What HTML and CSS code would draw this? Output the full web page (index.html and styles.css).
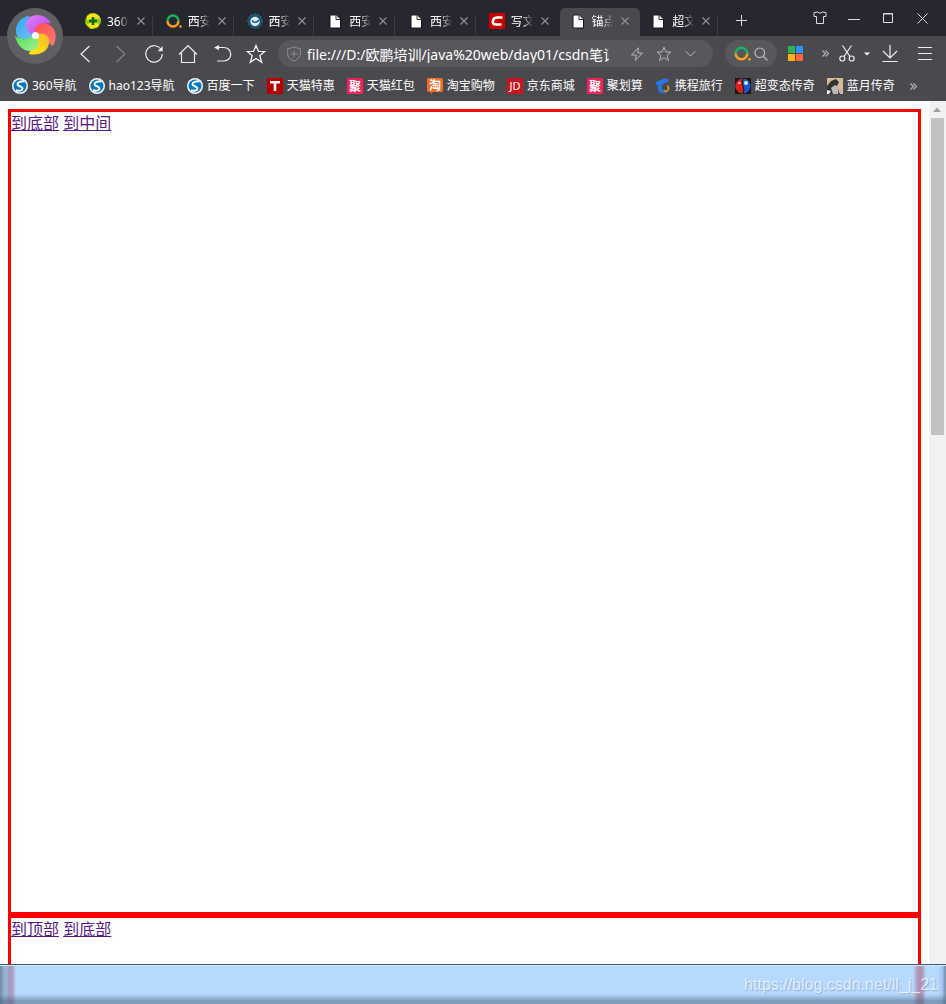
FILE: index.html
```html
<!DOCTYPE html>
<html lang="zh-CN">
<head>
<meta charset="utf-8">
<title>锚点</title>
<link rel="stylesheet" href="styles.css">
</head>
<body>
<svg class="defs" aria-hidden="true">
  <symbol id="close" viewBox="0 0 8 8"><path d="M.5 .5l7 7M7.5 .5l-7 7" fill="none" stroke="#929297" stroke-width="1.1"/></symbol>
  <symbol id="file" viewBox="0 0 16 16"><path d="M3 2h6.500l4 4v9H3z" fill="#fff" stroke="#17171b" stroke-width="1"/><path d="M9 2.500V6.500h4" fill="none" stroke="#35353a"/></symbol>
  <symbol id="sogou" viewBox="0 0 16 16"><circle cx="8" cy="8" r="8" fill="#eef4f8"/><circle cx="8" cy="8" r="6.500" fill="#0878bd"/><path d="M12.500 3.500C9 3 5.500 4 5.500 6.200c0 2.200 5 2 5 4.300 0 2.200-3.500 2.800-6.500 1.800" fill="none" stroke="#fff" stroke-width="2"/></symbol>
  <symbol id="ju" viewBox="0 0 16 16"><rect width="16" height="16" rx="1.500" fill="#f5215c"/><text x="8" y="12.500" text-anchor="middle" class="glyph">聚</text></symbol>
  <symbol id="ring" viewBox="0 0 16 16"><path d="M1.500 8a5.500 5.500 0 0 1 11 0" fill="none" stroke="#17b35f" stroke-width="2.400"/><path d="M1.500 8a5.500 5.500 0 0 0 11 0" fill="none" stroke="#f9a11b" stroke-width="2.400"/><circle cx="14.500" cy="13.500" r="1.300" fill="#f9a11b"/></symbol>
  <symbol id="star" viewBox="0 0 20 20"><path d="M10 1.500l2.500 6h6.200l-4.900 4.100 1.900 6.700L10 14.500l-5.700 3.800 1.900-6.700-4.900-4.100h6.200z" fill="none" stroke="currentColor" stroke-width="1.200"/></symbol>
</svg>

<header class="chrome">
  <button class="logo" aria-label="浏览器菜单">
    <svg viewBox="0 0 56 56">
      <defs>
        <linearGradient id="gb" x1="0" y1="0" x2="1" y2="1"><stop stop-color="#2aa4f4"/><stop offset="1" stop-color="#7cc4ee"/></linearGradient>
        <linearGradient id="gp" x1="0" y1="0" x2="1" y2="1"><stop stop-color="#e284f8"/><stop offset="1" stop-color="#b13cea"/></linearGradient>
        <linearGradient id="gr" x1="0" y1="0" x2="1" y2="1"><stop stop-color="#ff4d4a"/><stop offset="1" stop-color="#ff7b74"/></linearGradient>
        <linearGradient id="gy" x1="1" y1="0" x2="0" y2="1"><stop stop-color="#f7b62e"/><stop offset="1" stop-color="#ffee00"/></linearGradient>
        <linearGradient id="gg" x1="0" y1="0" x2="1" y2="1"><stop stop-color="#50dc62"/><stop offset="1" stop-color="#a8f08f"/></linearGradient>
      </defs>
      <circle cx="28" cy="28" r="28" fill="#606063"/>
      <path d="M28 28C20 32 10 34 9 24C8 15 15 8 23 8Q20 12 20 16Q21 23 28 28z" fill="url(#gb)"/>
      <path d="M28 28C18 24 17 14 22 10C30 4 40 8 44 15Q36 15 32 18Q29 21 28 28z" fill="url(#gp)"/>
      <path d="M28 28C25 18 34 13 41 16C49 20 51 29 46 38Q43 37 41 33Q37 26 28 28z" fill="url(#gr)"/>
      <path d="M28 28C36 22 43 28 42 35C41 44 32 48 22 46Q22 43 27 41Q34 36 28 28z" fill="url(#gy)"/>
      <path d="M28 28Q35 36 29 41C21 46 11 41 8 28Q13 32 18 31Q24 29 28 28z" fill="url(#gg)"/>
      <circle cx="28.500" cy="27.500" r="3.500" fill="#fff"/>
    </svg>
  </button>

  <div class="tabstrip">
    <nav class="tabs" aria-label="标签页">
      <div class="tab"><svg class="fav" viewBox="0 0 16 16"><circle cx="8" cy="8" r="8" fill="#3ca80a"/><path d="M2 3a8 8 0 0 1 12 0l2 4-3 7-7 2-5-5z" fill="#ffe012"/><path d="M0 9q5-5 16-3l-1 5q-8-3-14 1z" fill="#8ccc17"/><path d="M8 4v8M4 8h8" stroke="#126b08" stroke-width="2.600"/></svg><a class="name" href="#top">360导</a><button class="x" aria-label="关闭"><svg><use href="#close"/></svg></button></div>
      <div class="tab"><svg class="fav"><use href="#ring"/></svg><a class="name" href="#top">西安欧</a><button class="x" aria-label="关闭"><svg><use href="#close"/></svg></button></div>
      <div class="tab"><svg class="fav" viewBox="0 0 16 16"><circle cx="8" cy="8" r="7" fill="#164f75" stroke="#2c617e" stroke-dasharray="2 1.500" stroke-width="1.500"/><circle cx="8" cy="8.500" r="4.700" fill="#d9ebf2"/><path d="M5 7.500q3 4 7-.5" fill="none" stroke="#174f72" stroke-width="1.400"/></svg><a class="name" href="#top">西安欧</a><button class="x" aria-label="关闭"><svg><use href="#close"/></svg></button></div>
      <div class="tab"><svg class="fav"><use href="#file"/></svg><a class="name" href="#top">西安欧</a><button class="x" aria-label="关闭"><svg><use href="#close"/></svg></button></div>
      <div class="tab"><svg class="fav"><use href="#file"/></svg><a class="name" href="#top">西安欧</a><button class="x" aria-label="关闭"><svg><use href="#close"/></svg></button></div>
      <div class="tab plain"><svg class="fav" viewBox="0 0 16 16"><rect width="16" height="16" fill="#c90000"/><path d="M13.500 4.500H8.500Q4.500 4.500 3.800 8Q3.300 11.500 7 11.500H12.500" fill="none" stroke="#fff" stroke-width="2.400"/></svg><a class="name" href="#top">写文章</a><button class="x" aria-label="关闭"><svg><use href="#close"/></svg></button></div>
      <div class="tab active"><svg class="fav"><use href="#file"/></svg><a class="name" href="#top">锚点链</a><button class="x" aria-label="关闭"><svg><use href="#close"/></svg></button></div>
      <div class="tab"><svg class="fav"><use href="#file"/></svg><a class="name" href="#top">超文本</a><button class="x" aria-label="关闭"><svg><use href="#close"/></svg></button></div>
    </nav>
    <button class="newtab" aria-label="新建标签页"><svg width="11" height="11" viewBox="0 0 11 11"><path d="M5.500 0v11M0 5.500h11" stroke="#dcdcde"/></svg></button>
    <div class="window-tools">
      <button aria-label="皮肤"><svg width="14" height="14" viewBox="0 0 14 14"><path d="M4.500 1L1 1.500v4h2.500v7h7v-7H13v-4L9.500 1Q7 3.500 4.500 1z" fill="none" stroke="#dcdcde"/></svg></button>
      <button aria-label="最小化"><svg width="12" height="12" viewBox="0 0 12 12"><path d="M0 7.500h12" stroke="#dcdcde"/></svg></button>
      <button aria-label="最大化"><svg width="10" height="10" viewBox="0 0 10 10"><path d="M.5 .5h9v9h-9zM0 1h10" fill="none" stroke="#dcdcde"/></svg></button>
      <button aria-label="关闭窗口"><svg width="11" height="11" viewBox="0 0 11 11"><path d="M.5 .5l10 10M10.500 .5l-10 10" stroke="#dcdcde"/></svg></button>
    </div>
  </div>

  <div class="toolbar">
    <div class="navkeys">
      <button aria-label="后退"><svg viewBox="0 0 20 20"><path d="M13.500 2L5 10l8.500 8" class="line"/></svg></button>
      <button aria-label="前进" class="off"><svg viewBox="0 0 20 20"><path d="M6.500 2L15 10l-8.500 8" class="line"/></svg></button>
      <button aria-label="刷新"><svg viewBox="0 0 20 20"><path d="M17.200 6A8.200 8.200 0 1 0 18.200 10" class="line"/><path d="M18.700 2v5.300h-5z" fill="#eee"/></svg></button>
      <button aria-label="主页"><svg viewBox="0 0 20 20"><path d="M1 10.500L10 1.500l9 9M3.500 9v9.500h13V9" class="line"/></svg></button>
      <button aria-label="恢复"><svg viewBox="0 0 20 20"><path d="M5 3.500h7a6.500 6.500 0 0 1 0 13.500H5" class="line"/><path d="M2 3.500L7 1v5.300z" fill="#eee"/></svg></button>
      <button aria-label="收藏"><svg><use href="#star"/></svg></button>
    </div>
    <div class="address">
      <svg class="shield" viewBox="0 0 14 16"><path d="M7 .8Q10 2.500 13.300 2.500V9Q12.500 13 7 15.300Q1.500 13 .7 9V2.500Q4 2.500 7 .8zM7 4.500v7M3.500 8h7" fill="none" stroke="#8d8d91"/></svg>
      <input class="url" aria-label="地址" value="file:///D:/欧鹏培训/java%20web/day01/csdn笔记">
      <button aria-label="极速模式"><svg width="14" height="14" viewBox="0 0 14 14"><path d="M8.500 .8L1.500 8h4.800l-1 5.300L12.500 6H7.700z" fill="none" stroke="currentColor"/></svg></button>
      <button aria-label="收藏此页"><svg width="16" height="16"><use href="#star"/></svg></button>
      <button aria-label="展开"><svg width="11" height="11" viewBox="0 0 11 11"><path d="M.5 3l5 5 5-5" fill="none" stroke="currentColor"/></svg></button>
    </div>
    <button class="search" aria-label="搜索"><svg width="17" height="17"><use href="#ring"/></svg><svg width="14" height="14" viewBox="0 0 14 14"><circle cx="5.800" cy="5.800" r="4.800" fill="none" stroke="#b9b9bc" stroke-width="1.200"/><path d="M9.500 9.500l4 4" stroke="#b9b9bc" stroke-width="1.200"/></svg></button>
    <div class="extras">
      <button class="w-apps" aria-label="应用"><svg width="15" height="15" viewBox="0 0 15 15"><path d="M0 0h7v7H0z" fill="#2bb357"/><path d="M8 0h7v7H8z" fill="#2b93fb"/><path d="M0 8h7v7H0z" fill="#ffb20f"/><path d="M8 8h7v7H8z" fill="#ff6340"/></svg></button>
      <button class="w-more" aria-label="更多扩展"><svg width="7" height="7" viewBox="0 0 7 7"><path d="M.5 .5l3 3-3 3M3.500 .5l3 3-3 3" fill="none" stroke="#b4b4b7" stroke-width="1.200"/></svg></button>
      <button class="w-cut" aria-label="截图"><svg width="16" height="17" viewBox="0 0 16 17"><path d="M3.500 .5l7.500 11M12.500 .5L5 11.500" class="line"/><circle cx="3.300" cy="13.500" r="2.500" class="line"/><circle cx="12.700" cy="13.500" r="2.500" class="line"/></svg></button>
      <button class="w-caret" aria-label="截图选项"><svg width="6" height="4" viewBox="0 0 6 4"><path d="M0 .5h6l-3 3z" fill="#fff"/></svg></button>
      <button class="w-down" aria-label="下载"><svg width="16" height="17" viewBox="0 0 16 17"><path d="M8 0v13M1 6l7 7 7-7M.5 16.500h15" class="line"/></svg></button>
      <button class="w-menu" aria-label="菜单"><svg width="14" height="13" viewBox="0 0 14 13"><path d="M0 .5h14M0 6.500h14M0 12.500h14" class="line"/></svg></button>
    </div>
  </div>

  <nav class="bookmarks" aria-label="收藏栏">
    <a href="#top"><svg><use href="#sogou"/></svg>360导航</a>
    <a href="#top"><svg><use href="#sogou"/></svg>hao123导航</a>
    <a href="#top"><svg><use href="#sogou"/></svg>百度一下</a>
    <a href="#top"><svg viewBox="0 0 16 16"><rect width="16" height="16" rx="1" fill="#b80000"/><path d="M3 4.300h10M8 4v9" stroke="#fff" stroke-width="2.600"/></svg>天猫特惠</a>
    <a href="#top"><svg><use href="#ju"/></svg>天猫红包</a>
    <a href="#top"><svg viewBox="0 0 16 16"><path d="M1 0h14l1 1v12l-1 1H6l-2 2-.5-2H1l-1-1V1z" fill="#f36b29"/><text x="8" y="11.500" text-anchor="middle" class="glyph">淘</text></svg>淘宝购物</a>
    <a href="#top"><svg viewBox="0 0 16 16"><rect width="16" height="16" fill="#c9151e"/><text x="8" y="12" text-anchor="middle" class="glyph jd">JD</text></svg>京东商城</a>
    <a href="#top"><svg><use href="#ju"/></svg>聚划算</a>
    <a href="#top"><svg viewBox="0 0 16 16"><path d="M1 7Q0 3 5 2.500Q9-1 14 1.500Q13 5 9 5Q6 7 7 10Q8 14 12 15Q5 17 3 12Q2 9 3.500 7z" fill="#2877dc"/><path d="M12.500 7.500Q15 11 12 13Q10 14 9 12" fill="none" stroke="#e9972a" stroke-width="1.600"/></svg>携程旅行</a>
    <a href="#top"><svg viewBox="0 0 16 16"><rect width="16" height="16" fill="#24170f"/><circle cx="8" cy="8" r="7.500" fill="#1459d5"/><path d="M8 .5a7.500 7.500 0 0 0 0 15Q10 11 8 8T8 .5Z" fill="#dc2018"/><path d="M8 .5q-2 4 0 7.500t0 7.500" stroke="#111" fill="none"/><circle cx="11" cy="5" r="2" fill="#d6e9ff"/><circle cx="4.500" cy="5" r="1.300" fill="#ffaaa0"/></svg>超变态传奇</a>
    <a href="#top"><svg viewBox="0 0 16 16"><rect width="16" height="16" fill="#d4bd91"/><path d="M0 8l4-5 5-2 3 3-2 4 3 8H0z" fill="#353230"/><path d="M4 10l4-3 4 2-1 7H6z" fill="#b9b9b7"/><path d="M0 12l4 1-2 3H0z" fill="#eee"/><path d="M12 11h3v4h-3z" fill="#d7a7a0"/></svg>蓝月传奇</a>
    <button aria-label="更多收藏"><svg viewBox="0 0 7 7"><path d="M.5 .5l3 3-3 3M3.500 .5l3 3-3 3" fill="none" stroke="#b4b4b7" stroke-width="1.200"/></svg></button>
  </nav>
</header>

<div class="view">
  <main class="page" id="top">
    <section class="box"><a href="#bottom">到底部</a> <a href="#middle">到中间</a></section>
    <section class="box" id="middle"><a href="#top">到顶部</a> <a href="#bottom">到底部</a></section>
    <section class="box" id="bottom"></section>
  </main>
  <div class="scrollbar" aria-hidden="true">
    <svg width="17" height="17" viewBox="0 0 17 17"><path d="M4 11h8L8 6.500z" fill="#a0a0a0"/></svg>
    <div class="thumb"></div>
  </div>
</div>

<footer class="taskbar">https://blog.csdn.net/ll_j_21</footer>
</body>
</html>
```

FILE: styles.css
```css
* { box-sizing: border-box; }

body {
  margin: 0;
  height: 100vh;
  display: flex;
  flex-direction: column;
  overflow: hidden;
  background: #fff;
  font-family: "Noto Sans", "Noto Sans CJK SC", sans-serif;
}

button {
  padding: 0;
  border: 0;
  background: none;
  color: inherit;
  display: flex;
  align-items: center;
  justify-content: center;
}

svg { display: block; flex: none; }
.defs { position: absolute; width: 0; height: 0; }
.line { fill: none; stroke: #eee; stroke-width: 1.2; }
.glyph { font: 700 12px "Noto Sans CJK SC", sans-serif; fill: #fff; }
.glyph.jd { font: 11px "Noto Sans", sans-serif; }

.chrome {
  position: relative;
  flex: none;
  background: #4a4a4e;
  color: #fff;
  font-size: 12px;
}
.logo { position: absolute; left: 7px; top: 8px; z-index: 1; }
.logo svg { width: 56px; height: 56px; }

/* tab strip */
.tabstrip {
  display: flex;
  height: 36px;
  padding-left: 72px;
  background: #27272f;
}
.tabs { display: flex; flex: 0 1 646px; min-width: 0; padding-top: 8px; }
.tab {
  position: relative;
  display: flex;
  flex: 1 1 0;
  min-width: 0;
  align-items: center;
  padding: 0 8px 2px 13px;
}
.tab::after {
  content: "";
  position: absolute;
  right: 0;
  top: 8px;
  bottom: 0;
  width: 1px;
  background: #3b3b43;
}
.tab.active::after, .tab.plain::after { display: none; }
.tab.active {
  margin: 0 -3px 0 3px;
  padding: 0 11px 2px 10px;
  border-radius: 5px 5px 0 0;
  background: #4a4a4e;
}
.fav { width: 16px; height: 16px; }
.name {
  flex: 1;
  min-width: 0;
  margin: 0 8px 0 6px;
  overflow: hidden;
  white-space: nowrap;
  color: #fff;
  text-decoration: none;
  -webkit-mask-image: linear-gradient(90deg, #000 50%, transparent);
  mask-image: linear-gradient(90deg, #000 50%, transparent);
}
.x svg { width: 8px; height: 8px; }
.newtab { width: 47px; padding-top: 5px; }
.window-tools { display: flex; margin-left: auto; padding-right: 7px; }
.window-tools button { width: 34px; }

/* toolbar */
.toolbar { display: flex; align-items: center; height: 35px; padding-left: 69px; }
.navkeys { display: flex; margin-right: 5px; }
.navkeys button { width: 34px; height: 34px; }
.navkeys svg { width: 20px; height: 20px; }
.off { opacity: .35; }
.address {
  display: flex;
  align-items: center;
  flex: 1;
  min-width: 0;
  height: 27px;
  padding: 0 9px;
  border-radius: 14px;
  background: #58585c;
  color: #b9b9bc;
}
.shield { width: 14px; height: 16px; margin-right: 6px; }
.url {
  flex: 1;
  min-width: 0;
  margin-right: 14px;
  padding: 0;
  border: 0;
  background: none;
  color: #fff;
  font: 14px "Noto Sans", "Noto Sans CJK SC", sans-serif;
}
.address button { width: 27px; height: 27px; }
.search {
  width: 52px;
  height: 27px;
  margin-left: 12px;
  gap: 3px;
  border-radius: 14px;
  background: #58585c;
}
.extras { display: flex; align-items: center; }
.extras button { height: 27px; }
.w-apps { width: 37px; }
.w-more { width: 22px; }
.w-cut { width: 21px; }
.w-caret { width: 20px; }
.w-down { width: 26px; }
.w-menu { width: 43px; }

/* bookmarks */
.bookmarks {
  display: flex;
  align-items: center;
  gap: 12px;
  height: 30px;
  padding-left: 12px;
  overflow: hidden;
}
.bookmarks a {
  display: flex;
  align-items: center;
  gap: 4px;
  color: #fff;
  line-height: 18px;
  text-decoration: none;
  white-space: nowrap;
}
.bookmarks svg { width: 16px; height: 16px; }
.bookmarks button svg { width: 7px; height: 7px; }
.bookmarks button { width: 14px; }

/* page */
.view { display: flex; flex: 1; min-height: 0; }
.page { flex: 1; min-width: 0; padding: 8px; overflow: hidden; }
.box {
  height: 806px;
  border: 3px solid #f00;
  font-size: 16px;
  line-height: 22px;
}
.box a { color: #551a8b; }
.scrollbar { width: 17px; background: #f1f1f1; }
.thumb { height: 317px; margin: 0 2px; background: #c1c1c1; }

/* taskbar */
.taskbar {
  flex: none;
  height: 40px;
  padding: 0 8px;
  border-top: 1px solid #43566a;
  background:
    linear-gradient(transparent 29px, rgba(70, 95, 120, .5) 36px),
    linear-gradient(90deg, rgba(55, 75, 100, .55), rgba(110, 130, 165, .3) 6px, transparent 16px),
    linear-gradient(270deg, rgba(55, 75, 100, .55), rgba(110, 130, 165, .2) 4px, transparent 8px),
    linear-gradient(90deg, transparent 5px, rgba(170, 75, 105, .4) 9px, rgba(170, 75, 105, .4) 12px, transparent 16px),
    linear-gradient(270deg, transparent 20px, rgba(170, 75, 105, .5) 24px, rgba(170, 75, 105, .5) 28px, transparent 33px),
    #b6d9ff;
  box-shadow: inset 0 1px #d3e8ff;
  color: rgba(255, 255, 255, .7);
  font: 16px/40px "Liberation Sans", Arial, sans-serif;
  text-align: right;
  text-shadow: 1px 1px 1px rgba(80, 100, 130, .35);
}
```
